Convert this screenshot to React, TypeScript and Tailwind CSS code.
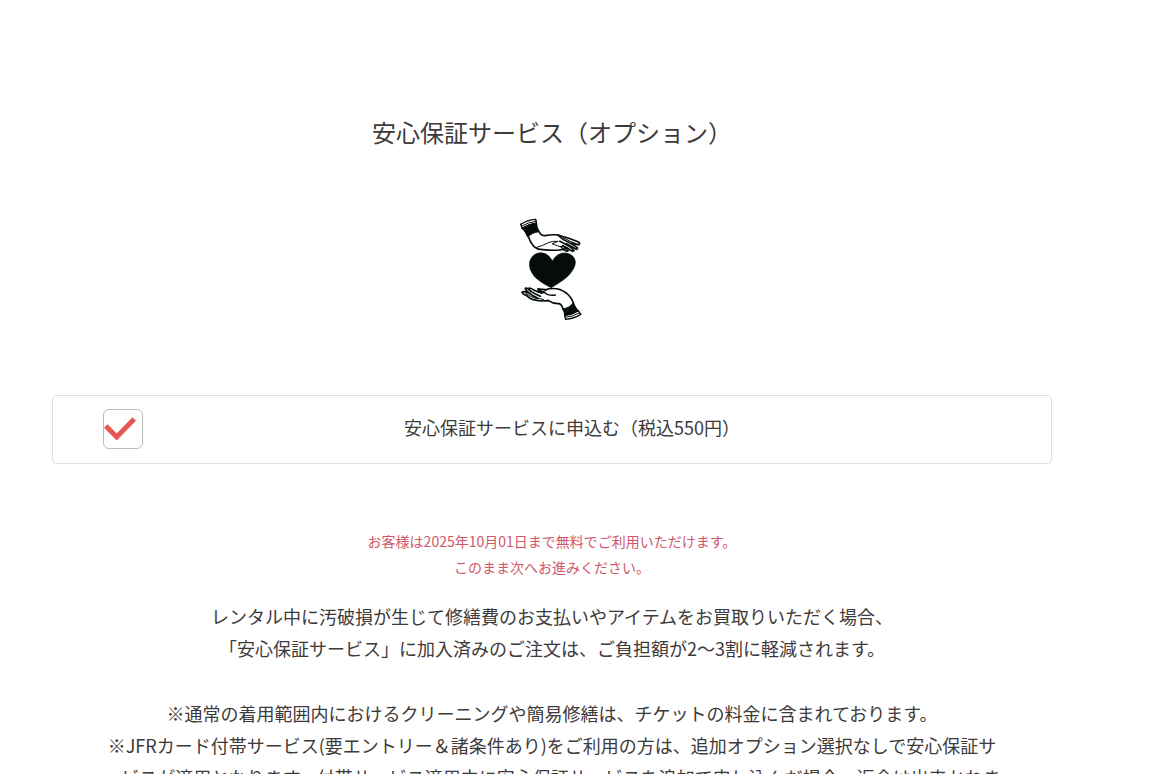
import React, { useState } from 'react';

function HandsHeartIcon() {
  return (
    <svg
      viewBox="6 0 240 345"
      className="w-20 h-[115px]"
      fill="none"
      stroke="#050c0a"
      strokeWidth="5"
      strokeLinecap="round"
      strokeLinejoin="round"
      aria-hidden="true"
    >
      {/* upper hand */}
      <path d="M32 43Q51 30 77 28" strokeWidth="4" />
      <path d="M34 49Q54 36 79 34" strokeWidth="3" />
      <path d="M32 43L37 56M77 28L80 42" strokeWidth="4" />
      <path d="M36 54Q56 41 79 39Q81 54 88 65Q66 67 53 81Q47 66 36 54Z" fill="#050c0a" strokeWidth="3" />
      <path d="M88 66Q92 77 105 77Q125 73 145 75Q156 80 174 84Q194 91 207 97Q211 101 206 104Q196 103 187 98" />
      <path d="M56 81Q62 101 75 112Q83 119 98 119Q128 122 149 120Q161 119 170 114" />
      <path d="M80 112Q99 107 113 99Q126 92 144 94Q137 98 126 101Q134 105 143 107Q149 112 158 110" strokeWidth="3" />
      <path d="M145 76Q158 89 176 97Q193 106 202 113Q204 118 199 118Q185 110 169 101" />
      <path d="M149 94Q164 101 178 109Q189 116 192 122Q188 125 181 120Q171 112 159 107" />
      <path d="M157 107Q166 113 175 122Q171 126 164 121Q157 117 153 110" strokeWidth="4" />
      <path d="M160 83Q178 93 198 102" strokeWidth="3" />

      {/* heart */}
      <path
        d="M127 154C116 127 88 122 71 136C50 154 57 184 79 205C94 218 110 226 123 233C139 224 158 213 174 198C195 177 205 151 185 136C164 121 137 131 127 154Z"
        fill="#050c0a"
        strokeWidth="2"
      />

      {/* lower hand */}
      <path d="M112 237Q132 233 151 239Q170 247 179 259Q187 269 190 279" />
      <path d="M114 271Q130 282 147 281Q154 282 159 296" />
      <path d="M158 297Q180 294 190 278Q196 292 205 303Q188 315 164 317Q164 306 158 297Z" fill="#050c0a" strokeWidth="3" />
      <path d="M165 322Q188 321 209 308" strokeWidth="3" />
      <path d="M167 328Q192 326 212 313" strokeWidth="4" />
      <path d="M164 316L167 328M205 302L212 313" strokeWidth="4" />
      <path d="M84 237Q98 237 112 239Q101 243 98 246Q107 248 111 253Q125 257 136 255" strokeWidth="4" />
      <path d="M84 237Q88 249 98 249Q94 239 84 237Z" fill="#050c0a" />
      <path d="M96 249Q84 247 73 241Q63 233 57 234Q55 238 63 244Q77 253 91 259" />
      <path d="M63 244Q51 232 46 235Q46 241 57 249Q70 259 83 264" />
      <path d="M54 248Q41 242 36 247Q39 253 49 256Q56 264 70 269Q92 275 115 272" />
      <path d="M47 250Q61 260 76 265Q89 264 101 269" strokeWidth="3" />
    </svg>
  );
}

export default function App() {
  const [checked, setChecked] = useState(true);

  return (
    <div
      lang="ja"
      className="min-h-screen bg-white pr-12 pt-[114px] pb-16 text-[#3e3a39] font-['Noto_Sans_CJK_JP',sans-serif]"
    >
      <main className="max-w-[1000px] mx-auto flex flex-col items-center">
        <h1 className="text-2xl leading-9">安心保証サービス（オプション）</h1>

        <div className="mt-[60px] mb-[70px]">
          <HandsHeartIcon />
        </div>

        <label
          htmlFor="guarantee"
          className="w-full flex items-start px-[50px] pt-[13px] pb-[14px] border border-[#ddd] rounded-[5px] cursor-pointer"
        >
          <span className="relative shrink-0 flex">
            <input
              id="guarantee"
              type="checkbox"
              checked={checked}
              onChange={(e) => setChecked(e.target.checked)}
              className="appearance-none size-10 bg-white border border-[#bbb] rounded-md"
            />
            {checked && (
              <svg viewBox="0 0 40 40" className="absolute inset-0 size-10 pointer-events-none" aria-hidden="true">
                <path d="M2.8 17L13.7 28L31.2 10" fill="none" stroke="#e85555" strokeWidth="5" />
              </svg>
            )}
          </span>
          <span className="flex-1 text-center text-lg leading-9">
            安心保証サービスに申込む（税込550円）
          </span>
        </label>

        <p className="mt-16 text-center text-sm leading-[26px] text-[#d0576b]">
          お客様は2025年10月01日まで無料でご利用いただけます。
          <br />
          このまま次へお進みください。
        </p>

        <div className="max-w-[900px] mt-5 space-y-[33px] text-center text-lg leading-8">
          <p>
            レンタル中に汚破損が生じて修繕費のお支払いやアイテムをお買取りいただく場合、
            <br />
            「安心保証サービス」に加入済みのご注文は、ご負担額が2〜3割に軽減されます。
          </p>
          <p>
            ※通常の着用範囲内におけるクリーニングや簡易修繕は、チケットの料金に含まれております。
            <br />
            ※JFRカード付帯サービス(要エントリー＆諸条件あり)をご利用の方は、追加オプション選択なしで安心保証サービスが適用となります。付帯サービス適用中に安心保証サービスを追加で申し込んだ場合、返金は出来かねます。
          </p>
        </div>
      </main>
    </div>
  );
}
